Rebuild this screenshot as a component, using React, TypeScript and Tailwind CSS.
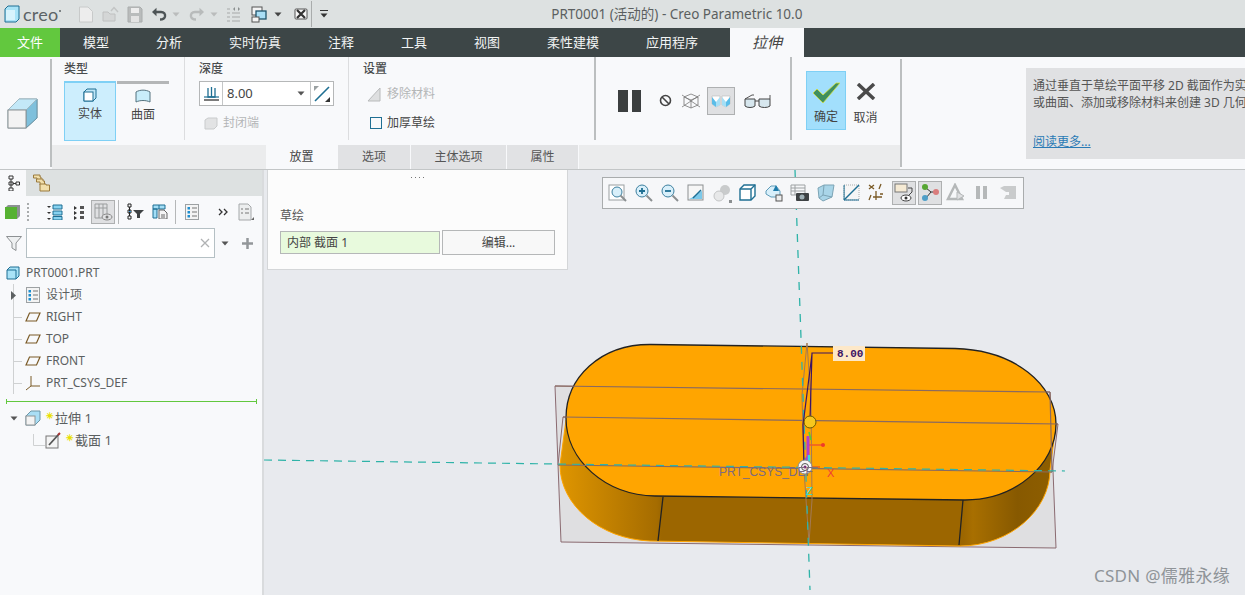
import React from 'react';

type IconProps = { children: React.ReactNode; w?: number; h?: number };

// every small glyph uses the same wrapper, drawn on a box of its real pixel size
const Ico = ({ children, w = 16, h = 16 }: IconProps) => (
  <svg width={w} height={h} viewBox={`0 0 ${w} ${h}`} className="block shrink-0" fill="none">
    {children}
  </svg>
);

const Caret = ({ color = '#555' }: { color?: string }) => (
  <Ico w={8} h={5}>
    <path d="M0.5 0.5H7.5L4 4.5Z" fill={color} />
  </Ico>
);

const SolidCube = () => (
  <Ico w={32} h={32}>
    <path d="M2 13L13 2H31V21L20 31H2Z" fill="#d5ecf6" stroke="#8fa6ad" />
    <path d="M20 13L31 2V21L20 31Z" fill="#7fc0dc" stroke="#6d95a6" />
    <path d="M2 13L13 2H31L20 13Z" fill="#c3e8f8" stroke="#9fb9c4" />
    <rect x="2" y="13" width="18" height="18" fill="#f3f3f3" stroke="#8e9496" />
  </Ico>
);

const QuickBar = () => (
  <div className="flex h-[28px] items-center bg-[#dde1e1]">
    <div className="ml-[3px] flex items-center gap-[3px]">
      <Ico w={17} h={18}>
        <path d="M2 4L5 1H16V14L13 17H2Z" fill="#a9e3f7" stroke="#1f6f93" />
        <path d="M3 5H12V15H3Z" fill="#d8f3fc" />
      </Ico>
      <span className="[font-family:'Lato',sans-serif] text-[18px] leading-none tracking-[0.2px] text-[#5c6366]">creo</span>
      <span className="mb-[6px] ml-[-2px] h-[2px] w-[2px] rounded-full bg-[#5c6366]" />
    </div>
    <div className="ml-[17px] flex items-center gap-[8px] opacity-90">
      <Ico w={16} h={17}>
        <path d="M1.5 1H10L14.5 5.5V16H1.5Z" fill="#efefef" stroke="#c6c8c8" />
      </Ico>
      <Ico w={17} h={17}>
        <path d="M1 15V6H6L8 8H13V15Z" fill="#d4d5d5" stroke="#bcbebe" />
        <path d="M9 5L12 1.5L16 6" stroke="#c0c2c2" strokeWidth="1.4" />
      </Ico>
      <Ico w={16} h={17}>
        <path d="M1 1H13L15 3V16H1Z" fill="#b6b9b9" stroke="#a5a8a8" />
        <rect x="4" y="2" width="8" height="5" fill="#efefef" />
        <rect x="4" y="10" width="8" height="6" fill="#e4e4e4" />
      </Ico>
      <div className="flex items-center gap-[5px]">
        <Ico w={16} h={14}>
          <path d="M4 5H10C13 5 14.5 7 14 9.5C13.5 11.5 11.5 12.5 9 12.5" stroke="#3e4547" strokeWidth="2.4" />
          <path d="M1 5L5.5 0.8V9.2Z" fill="#3e4547" />
        </Ico>
        <Caret color="#b7b9b9" />
      </div>
      <div className="ml-[1px] flex items-center gap-[5px]">
        <Ico w={16} h={14}>
          <path d="M12 5H6C3 5 1.5 7 2 9.5C2.5 11.5 4.5 12.5 7 12.5" stroke="#b4b7b7" strokeWidth="2.4" />
          <path d="M15 5L10.5 0.8V9.2Z" fill="#b4b7b7" />
        </Ico>
        <Caret color="#b7b9b9" />
      </div>
    </div>
    <div className="ml-[8px] flex items-center">
      <Ico w={16} h={17}>
        <path d="M1 3H4M1 7H4M1 11H4M1 15H4M6 7H14M6 11H14M6 15H14" stroke="#b9bcbc" strokeWidth="1.5" />
        <path d="M7 3L9 1V5ZM14 3L12 1V5Z" fill="#8b9090" />
      </Ico>
      <div className="ml-[9px]">
        <Ico w={18} h={17}>
          <rect x="1" y="1" width="10" height="8" fill="#f4f4f4" stroke="#555" />
          <rect x="5" y="5" width="10" height="8" fill="#a9def5" stroke="#20536b" strokeWidth="1.3" />
          <rect x="1" y="11" width="7" height="5" fill="#f4f4f4" stroke="#555" />
        </Ico>
      </div>
      <div className="ml-[5px]">
        <Caret color="#444" />
      </div>
      <div className="ml-[12px]">
        <Ico w={14} h={12}>
          <rect x="1" y="1" width="12" height="10" rx="1" fill="#f7f7f7" stroke="#555" />
          <path d="M3 2L11 10M11 2L3 10" stroke="#333" strokeWidth="2.2" />
        </Ico>
      </div>
      <div className="ml-[3px] h-[26px] w-px bg-[#a9acac]" />
      <div className="ml-[8px] flex flex-col gap-[2px]">
        <div className="h-px w-[8px] bg-[#333]" />
        <Caret color="#333" />
      </div>
    </div>
    <div className="ml-[223px] text-[13.5px] text-[#5b5f60]">PRT0001 (活动的) - Creo Parametric 10.0</div>
  </div>
);

const menuItems = ['模型', '分析', '实时仿真', '注释', '工具', '视图', '柔性建模', '应用程序'];

const MenuBar = () => (
  <div className="flex h-[29px] items-center bg-[#3d4647] text-[13px] text-[#f2f4f4]">
    <div className="flex h-full w-[60px] items-center justify-center bg-[#62c83e] text-white">文件</div>
    <div className="ml-[23px] flex gap-[47px]">
      {menuItems.map((m) => (
        <span key={m}>{m}</span>
      ))}
    </div>
    <div className="ml-[32px] flex h-full w-[74px] items-center justify-center bg-[#f8f9fb] text-[15px] italic text-[#444]">
      拉伸
    </div>
  </div>
);

const GroupTitle = ({ children }: { children: React.ReactNode }) => (
  <div className="text-[12px] font-medium leading-[16px] text-[#4a4d4e]">{children}</div>
);

const ribbonTabs = [
  { label: '放置', w: 'w-[72px]', on: true },
  { label: '选项', w: 'w-[73px]', on: false },
  { label: '主体选项', w: 'w-[96px]', on: false },
  { label: '属性', w: 'w-[72px]', on: false },
];

const Ribbon = () => (
  <div className="flex h-[113px] border-b border-[#c3c6c7] bg-[#f8f9fb]">
    <div className="flex w-[50px] items-center pl-[6px]">
      <SolidCube />
    </div>
    <div className="my-[2px] w-[2px] bg-[#bcbfc0]" />
    <div className="flex w-[848px] flex-col">
      <div className="flex h-[88px]">
        {/* 类型 */}
        <div className="flex h-[83px] w-[133px] flex-col border-r border-[#dcdddf] pl-[12px] pt-[4px]">
          <GroupTitle>类型</GroupTitle>
          <div className="mt-[4px] flex gap-[1px]">
            <div className="flex h-[60px] w-[52px] flex-col items-center border border-[#7fd0f5] border-t-2 bg-[#cdeefd] pt-[5px] text-[12px] text-[#444]">
              <Ico w={14} h={14}>
                <path d="M1 4L4 1H13V10L10 13H1Z" fill="#bfe6f7" stroke="#1f6f93" />
                <rect x="1" y="4" width="9" height="9" fill="#fff" stroke="#1f6f93" />
              </Ico>
              <span className="mt-[3px] leading-[18px]">实体</span>
            </div>
            <div className="flex h-[60px] w-[52px] flex-col items-center border-t-[3px] border-[#b4b6b7] pt-[5px] text-[12px] text-[#444]">
              <Ico w={16} h={14}>
                <path d="M1 3C5 0.5 11 0.5 15 3V13C11 11 5 11 1 13Z" fill="#c8edfa" stroke="#55737f" />
              </Ico>
              <span className="mt-[3px] leading-[18px]">曲面</span>
            </div>
          </div>
        </div>
        {/* 深度 */}
        <div className="flex h-[83px] w-[164px] flex-col border-r border-[#dcdddf] pl-[14px] pt-[4px]">
          <GroupTitle>深度</GroupTitle>
          <div className="mt-[4px] flex h-[25px] w-[135px] items-center border border-[#b5b7b8] bg-white">
            <div className="flex h-full w-[23px] items-center justify-center border-r border-[#c4c6c7]">
              <Ico w={17} h={16}>
                <path d="M5 2V11H12V2M8.500 1V11" stroke="#1f6f93" strokeWidth="1.3" />
                <path d="M1 11H16" stroke="#1f6f93" strokeWidth="1.2" />
                <path d="M1 14H16" stroke="#333" strokeWidth="1.3" />
              </Ico>
            </div>
            <span className="ml-[4px] flex-1 text-[13px] text-[#444]">8.00</span>
            <div className="mr-[5px]">
              <Caret />
            </div>
            <div className="flex h-full w-[23px] items-center justify-center border-l border-[#c4c6c7]">
              <Ico w={18} h={18}>
                <path d="M2 16L16 2" stroke="#1f6f93" strokeWidth="1.6" />
                <path d="M1 1H6L1 6Z" fill="#9aa0a2" />
                <path d="M17 17H12L17 12Z" fill="#333" />
              </Ico>
            </div>
          </div>
          <div className="ml-[5px] mt-[8px] flex items-center gap-[5px] text-[12px] text-[#b4b6b7]">
            <Ico w={14} h={13}>
              <path d="M1 3L4 1H13V9L10 12H1Z" fill="#e2e3e4" stroke="#c9cbcc" />
            </Ico>
            封闭端
          </div>
        </div>
        {/* 设置 */}
        <div className="flex h-[83px] w-[247px] flex-col border-r-2 border-[#bcbfc0] pl-[14px] pt-[4px]">
          <GroupTitle>设置</GroupTitle>
          <div className="ml-[4px] mt-[8px] flex items-center gap-[5px] text-[12px] text-[#b4b6b7]">
            <Ico w={15} h={15}>
              <path d="M1 14L13 1V14Z" fill="#dedfe0" stroke="#b8babb" />
            </Ico>
            移除材料
          </div>
          <div className="ml-[7px] mt-[11px] flex items-center gap-[5px] text-[12px] text-[#444]">
            <div className="h-[12px] w-[12px] border border-[#1f6f93]" />
            加厚草绘
          </div>
        </div>
        {/* 暂停与预览 */}
        <div className="flex h-[83px] w-[196px] items-center border-r-2 border-[#bcbfc0] pl-[22px] pt-[4px]">
          <div className="flex gap-[3px]">
            <div className="h-[22px] w-[10px] bg-[#3c3f40]" />
            <div className="ml-[1px] h-[22px] w-[9px] bg-[#3c3f40]" />
          </div>
          <div className="ml-[18px]">
            <Ico w={13} h={13}>
              <circle cx="6.500" cy="6.500" r="5" stroke="#444" strokeWidth="1.600" />
              <path d="M3 3L10 10" stroke="#444" strokeWidth="1.600" />
            </Ico>
          </div>
          <div className="ml-[9px]">
            <Ico w={20} h={18}>
              <path d="M3 5L10 2L17 5V13L10 16L3 13ZM3 5L10 8L17 5M10 8V16M1 3L19 15M19 3L1 15" stroke="#777" strokeWidth="0.8" />
            </Ico>
          </div>
          <div className="ml-[6px] flex h-[28px] w-[28px] items-center justify-center border border-[#aeb0b1] bg-[#dfe0e2]">
            <Ico w={20} h={14}>
              <path d="M1 2H9V11L5 13L1 10ZM11 2H19V10L15 13L11 11Z" fill="#fff" stroke="#bbb" strokeWidth="0.6" />
              <path d="M1 3L5 8V13L1 10ZM19 3L15 8V13L19 10Z" fill="#5bbde8" />
              <path d="M9 3L5 8V13L9 11ZM11 3L15 8V13L11 11Z" fill="#a5dff6" />
            </Ico>
          </div>
          <div className="ml-[9px]">
            <Ico w={27} h={16}>
              <path d="M1 6L8 2H10M26 2V6" stroke="#555" />
              <path d="M1 6H11V13C9 15 3 15 1 13Z" fill="#d7e7ee" stroke="#444" />
              <path d="M15 6H26V13C24 15 17 15 15 13Z" fill="#d7e7ee" stroke="#444" />
              <path d="M11 8H15" stroke="#444" />
            </Ico>
          </div>
        </div>
        {/* 确定 取消 */}
        <div className="flex items-start pl-[14px] pt-[14px]">
          <div className="flex h-[59px] w-[40px] flex-col items-center justify-between border border-[#7fd0f5] bg-[#a2dffc] pb-[3px] pt-[9px] text-[12px] text-[#444]">
            <Ico w={28} h={24}>
              <path d="M1 12L5 8L11 14L24 2L28 2L11 22Z" fill="#3f8f5f" stroke="#d8e23a" strokeWidth="0.8" />
            </Ico>
            <span className="leading-[18px]">确定</span>
          </div>
          <div className="flex h-[59px] w-[39px] flex-col items-center justify-between pb-[3px] pt-[12px] text-[12px] text-[#444]">
            <Ico w={20} h={17}>
              <path d="M2 1L18 16M18 1L2 16" stroke="#4a4a4a" strokeWidth="3.500" />
            </Ico>
            <span className="leading-[18px]">取消</span>
          </div>
        </div>
      </div>
      <div className="flex h-[24px] bg-[#ebeced] pl-[214px] text-[12px] text-[#555]">
        {ribbonTabs.map((t) => (
          <div
            key={t.label}
            className={`flex ${t.w} items-center justify-center border-r border-[#f8f9fb] ${
              t.on ? 'bg-[#f8f9fb] text-[#444]' : 'bg-[#e1e2e4]'
            }`}
          >
            {t.label}
          </div>
        ))}
      </div>
    </div>
    <div className="my-[2px] w-[2px] bg-[#bcbfc0]" />
    <div className="min-w-0 flex-1 pl-[124px] pt-[11px]">
      <div className="flex h-[91px] flex-col overflow-hidden whitespace-nowrap bg-[#e0e1e3] pl-[7px] pt-[9px] text-[12px] leading-[17px] text-[#555]">
        <span>通过垂直于草绘平面平移 2D 截面作为实体</span>
        <span>或曲面、添加或移除材料来创建 3D 几何。</span>
        <span className="mt-[22px] text-[#2a7ab5] underline">阅读更多...</span>
      </div>
    </div>
  </div>
);

const Guide = ({ tail = true, caret = false }: { tail?: boolean; caret?: boolean }) => (
  <Ico w={25} h={22}>
    <path d="M13.500 0V22" stroke="#cfd1d2" />
    {tail && <path d="M13.500 11.500H22" stroke="#cfd1d2" />}
    {caret && <path d="M11 7L16 11.500L11 16Z" fill="#5c6062" />}
  </Ico>
);

const Plane = () => (
  <Ico w={16} h={10}>
    <path d="M1 9L4.500 1H15L11.500 9Z" stroke="#7a5a26" strokeWidth="1.200" />
  </Ico>
);

const ListIcon = () => (
  <Ico w={14} h={16}>
    <rect x="0.500" y="0.500" width="13" height="15" fill="#f4f4f4" stroke="#9da1a3" />
    <path d="M2.500 3H5V5.500H2.500ZM2.500 7H5V9.500H2.500ZM2.500 11H5V13.500H2.500Z" fill="#1d8ed0" />
    <path d="M7 4H12M7 8H12M7 12H12" stroke="#777" />
  </Ico>
);

const treeRow = 'flex h-[22px] items-center text-[12px] text-[#5b5f60]';

const Sidebar = () => (
  <div className="flex w-[264px] shrink-0 flex-col border-r-2 border-[#d9dbdd] bg-[#f8f9fb]">
    <div className="flex h-[26px] bg-[#dde1e1]">
      <div className="flex w-[26px] items-center justify-center bg-[#f8f9fb]">
        <Ico w={13} h={16}>
          <path d="M2 1H6V4H2ZM2 7H6V10H2ZM2 13H6V16H2ZM9 7H12.500V10H9ZM4 4V13M6 8.500H9" stroke="#333" />
        </Ico>
      </div>
      <div className="ml-[7px] flex items-center">
        <Ico w={17} h={18}>
          <path d="M0.500 1H7V3H8V7H4V4H0.500Z" fill="#f1dfab" stroke="#9a7a3c" />
          <path d="M3.500 5H10V7H11.500V11H7V8H3.500Z" fill="#f1dfab" stroke="#9a7a3c" />
          <path d="M7 10H13V11H16.500V17H7Z" fill="#f1dfab" stroke="#9a7a3c" />
        </Ico>
      </div>
    </div>
    <div className="flex h-[31px] items-center pl-[5px]">
      <Ico w={15} h={14}>
        <path d="M0 3L3 0H15V11L12 14H0Z" fill="#8c9193" />
        <rect x="0" y="2" width="12" height="12" fill="#56b132" />
      </Ico>
      <div className="ml-[7px] flex flex-col gap-[2px]">
        {[0, 1, 2, 3, 4].map((i) => (
          <div key={i} className="h-[2px] w-[2px] bg-[#a9acad]" />
        ))}
      </div>
      <div className="ml-[18px]">
        <Ico w={16} h={16}>
          <path d="M0 2H4L2 4ZM0 8H4L2 10ZM0 14H4L2 16Z" fill="#333" />
          <path d="M6 1H15V5H6ZM6 7H15V11H6ZM6 12.500H15V16H6Z" fill="#87d2f0" stroke="#1f6f93" />
        </Ico>
      </div>
      <div className="ml-[11px]">
        <Ico w={10} h={16}>
          <path d="M0 2L3 4L0 6ZM0 7L3 9L0 11ZM0 12L3 14L0 16Z" fill="#333" />
          <path d="M6 2H10V5H6ZM6 7H10V10H6ZM6 12H10V15H6Z" fill="#555" />
        </Ico>
      </div>
      <div className="ml-[7px] flex h-[24px] w-[24px] items-center justify-center border border-[#aeb0b1] bg-[#dfe0e2]">
        <Ico w={19} h={18}>
          <path d="M1 1H13V15H1ZM1 5H13M5 1V15M9 1V15" stroke="#9a9d9e" />
          <ellipse cx="13" cy="14" rx="5" ry="3" fill="#dfe0e2" stroke="#888" />
          <circle cx="13" cy="14" r="1.500" fill="#777" />
        </Ico>
      </div>
      <div className="ml-[3px] h-[24px] w-px bg-[#b5b7b8]" />
      <div className="ml-[8px]">
        <Ico w={18} h={17}>
          <path d="M1 1H4V4H1ZM1 7H4V10H1ZM1 13H4V16H1ZM2.500 4V13" stroke="#222" />
          <path d="M2 8H4V9H2Z" fill="#2a8ccc" />
          <path d="M6 7H17L13 11V15H10V11Z" fill="#3e4244" />
        </Ico>
      </div>
      <div className="ml-[7px]">
        <Ico w={16} h={15}>
          <path d="M1 1H13V5H1ZM1 5H5V14H1ZM7 1V5" fill="#a3def6" stroke="#1f6f93" />
          <path d="M7 6H12L15 9V15H7Z" fill="#f4f4f4" stroke="#666" />
          <path d="M9 11H13M9 13H13" stroke="#666" />
        </Ico>
      </div>
      <div className="ml-[7px] h-[24px] w-px bg-[#b5b7b8]" />
      <div className="ml-[9px]">
        <ListIcon />
      </div>
      <div className="ml-[19px]">
        <Ico w={10} h={8}>
          <path d="M1 1L4 4L1 7M6 1L9 4L6 7" stroke="#333" strokeWidth="1.300" />
        </Ico>
      </div>
      <div className="ml-[10px]">
        <Ico w={16} h={18}>
          <path d="M1 1H10L13 4V17H1Z" fill="#eceeef" stroke="#a5a8aa" />
          <path d="M3 6H5M7 6H11M3 10H5M7 10H11" stroke="#777" />
          <path d="M16 14V17H13Z" fill="#666" />
        </Ico>
      </div>
    </div>
    <div className="mt-px flex h-[30px] items-center pl-[6px]">
      <Ico w={16} h={15}>
        <path d="M0.500 0.500H15.500L10 7V14.500L6 12V7Z" fill="#eef0f1" stroke="#8d9193" />
      </Ico>
      <div className="ml-[4px] flex h-[30px] w-[189px] items-center justify-end border border-[#b5c0c4] bg-white pr-[4px]">
        <Ico w={10} h={10}>
          <path d="M1 1L9 9M9 1L1 9" stroke="#b0b2b3" strokeWidth="1.300" />
        </Ico>
      </div>
      <div className="ml-[6px]">
        <Caret />
      </div>
      <div className="ml-[13px]">
        <Ico w={11} h={11}>
          <path d="M5.500 0V11M0 5.500H11" stroke="#93979a" strokeWidth="2.500" />
        </Ico>
      </div>
    </div>
    <div className="mt-[4px] flex flex-col">
      <div className={`${treeRow} pl-[6px]`}>
        <Ico w={14} h={14}>
          <path d="M1 4L4 1H13V10L10 13H1Z" fill="#a9e3f7" stroke="#1f6f93" />
          <path d="M1 4H10V13" stroke="#1f6f93" />
        </Ico>
        <span className="ml-[6px]">PRT0001.PRT</span>
      </div>
      <div className={treeRow}>
        <div className="mr-px">
          <Guide tail={false} caret />
        </div>
        <ListIcon />
        <span className="ml-[6px]">设计项</span>
      </div>
      {['RIGHT', 'TOP', 'FRONT'].map((n) => (
        <div key={n} className={treeRow}>
          <Guide />
          <Plane />
          <span className="ml-[5px]">{n}</span>
        </div>
      ))}
      <div className={treeRow}>
        <Guide />
        <Ico w={16} h={16}>
          <path d="M6 1V11M6 11H15M6 11L1 15" stroke="#7a5a26" />
        </Ico>
        <span className="ml-[5px]">PRT_CSYS_DEF</span>
      </div>
      <div className="mt-[6px] flex h-[3px] w-[251px] translate-x-[6px] items-center justify-between">
        <div className="h-[5px] w-px bg-[#62c83e]" />
        <div className="h-px flex-1 bg-[#62c83e]" />
        <div className="h-[5px] w-px bg-[#62c83e]" />
      </div>
      <div className={`${treeRow} mt-[4px]`}>
        <div className="ml-[10px]">
          <Caret />
        </div>
        <div className="ml-[7px]">
          <Ico w={16} h={16}>
            <path d="M1 6L6 1H15V10L10 15H1Z" fill="#a9def5" stroke="#6d95a6" />
            <rect x="1" y="6" width="9" height="9" fill="#f3f3f3" stroke="#8e9496" />
          </Ico>
        </div>
        <span className="ml-[5px] text-[13px] leading-none"><Star />拉伸 1</span>
      </div>
      <div className={treeRow}>
        <div className="ml-[33px]">
          <Ico w={12} h={12}>
            <path d="M0.500 0V11.500H12" stroke="#cfd1d2" />
          </Ico>
        </div>
        <Ico w={17} h={17}>
          <rect x="1" y="4" width="12" height="12" fill="#f4f4f4" stroke="#777" />
          <path d="M4 13L14 2" stroke="#555" strokeWidth="1.800" />
          <path d="M13 3L15 1" stroke="#a33" strokeWidth="2" />
        </Ico>
        <span className="ml-[4px] text-[13px] leading-none"><Star />截面 1</span>
      </div>
    </div>
  </div>
);

const Star = () => (
  <span className="relative top-[-4px] mr-px text-[9px] font-bold text-[#e8e000]">✳</span>
);

const viewIcons: { key: string; on?: boolean; draw: React.ReactNode }[] = [
  { key: 'refit', draw: (<><rect x="1" y="2" width="15" height="15" fill="#fff" stroke="#9aa0a2" /><circle cx="9" cy="9" r="5" fill="#d8effa" stroke="#3c7f9f" /><path d="M12.500 12.500L18 18" stroke="#8b8f91" strokeWidth="2" /></>) },
  { key: 'in', draw: (<><circle cx="8" cy="8" r="6" fill="#d8effa" stroke="#3c7f9f" /><path d="M5 8H11M8 5V11" stroke="#1f6f93" strokeWidth="1.800" /><path d="M12.500 12.500L18 18" stroke="#8b8f91" strokeWidth="2" /></>) },
  { key: 'out', draw: (<><circle cx="8" cy="8" r="6" fill="#d8effa" stroke="#3c7f9f" /><path d="M5 8H11" stroke="#1f6f93" strokeWidth="1.800" /><path d="M12.500 12.500L18 18" stroke="#8b8f91" strokeWidth="2" /></>) },
  { key: 'repaint', draw: (<><rect x="2" y="2" width="15" height="15" fill="#f6f6f6" stroke="#8b8f91" /><path d="M3 16C9 14 12 9 16 8V16Z" fill="#7cc9ea" /><path d="M7 15L15 7" stroke="#1f6f93" strokeWidth="1.400" /></>) },
  { key: 'shade', draw: (<><circle cx="13" cy="7" r="5" fill="#c9cbcc" /><circle cx="7" cy="13" r="5" fill="#e7e8e9" stroke="#c3c5c6" /><path d="M17 17H20V20H17Z" fill="#8b8f91" /></>) },
  { key: 'box', draw: (<><path d="M2 6L6 2H17V13L13 17H2Z" fill="#fff" stroke="#1f6f93" strokeWidth="1.400" /><path d="M2 6H13V17M13 6L17 2" stroke="#1f6f93" strokeWidth="1.400" /></>) },
  { key: 'saved', draw: (<><path d="M2 8L7 3H12L16 8V14H7L2 11Z" fill="#d8effa" stroke="#5e9bb8" /><path d="M12 2L15 8H9Z" fill="#1f7cab" /><rect x="12" y="12" width="6" height="6" fill="#eee" stroke="#555" /></>) },
  { key: 'photo', draw: (<><path d="M1 2H15V12H1ZM1 5H15M1 8H15M5 2V12" stroke="#9da1a3" /><rect x="6" y="10" width="13" height="8" rx="1" fill="#3e4244" /><circle cx="12" cy="14" r="2.500" fill="#9fb0b6" /></>) },
  { key: 'trans', draw: (<><path d="M2 5L8 2H18L16 14L7 18L3 15Z" fill="#a9d5e8" stroke="#7ca4b5" /><path d="M8 2L7 12L3 15M7 12L16 14" stroke="#7ca4b5" /></>) },
  { key: 'hatch', draw: (<><rect x="2" y="2" width="15" height="15" fill="#f6f6f6" stroke="#a9acad" strokeDasharray="1 1" /><path d="M2 17L17 2" stroke="#1f6f93" strokeWidth="1.500" /><path d="M2 2H2.100V17H17" stroke="#1f6f93" /></>) },
  { key: 'datum', draw: (<><path d="M1 2L6 6M6 2L1 6M13 1L11 6M3 12L1 17M8 8L8 17M5 14H14M12 11H15" stroke="#7a5a26" strokeWidth="1.300" /></>) },
  { key: 'spin', on: true, draw: (<><rect x="1" y="1" width="12" height="8" fill="#f5ead4" stroke="#777" /><path d="M14 5H18V9M15 12L18 9" stroke="#444" /><ellipse cx="12" cy="15" rx="5" ry="3" fill="#fff" stroke="#444" /><circle cx="12" cy="15" r="1.500" fill="#333" /></>) },
  { key: 'nodes', on: true, draw: (<><path d="M6 5L11 9L6 15M11 9H16" stroke="#333" /><circle cx="5" cy="4" r="3" fill="#56a632" /><circle cx="16" cy="9" r="3" fill="#d97c7c" /><circle cx="5" cy="15" r="3" fill="#4f9ec7" /></>) },
  { key: 'play', draw: (<><path d="M9 2L2 16H16Z" stroke="#b5b8b9" strokeWidth="2.500" /><path d="M11 9L18 13L11 17Z" fill="#dfe0e2" stroke="#b5b8b9" /></>) },
  { key: 'pause', draw: (<><path d="M4 3H8V16H4ZM11 3H15V16H11Z" fill="#b5b8b9" /></>) },
  { key: 'solid', draw: (<><path d="M2 5L6 3H18V16H6L8 12H11V9H8L2 5Z" fill="#c9cbcc" /></>) },
];

const ViewToolbar = () => (
  <div className="absolute left-[338px] top-[7px] flex h-[32px] w-[422px] items-center border border-[#a9acad] bg-[#f6f7f9] pl-[2px]">
    {viewIcons.map((v) => (
      <div key={v.key} className="flex w-[26px] justify-center">
        <div
          className={`flex h-[24px] w-[24px] items-center justify-center ${
            v.on ? 'border border-[#aeb0b1] bg-[#dfe0e2]' : ''
          }`}
        >
          <Ico w={20} h={20}>
            {v.draw}
          </Ico>
        </div>
      </div>
    ))}
  </div>
);

const PlacementPanel = () => (
  <div className="absolute left-[3px] top-0 h-[100px] w-[301px] border border-t-0 border-[#d4d6d8] bg-[#fcfcfc] px-[12px]">
    <div className="mt-[7px] flex justify-center gap-[3px]">
      {[0, 1, 2, 3].map((i) => (
        <div key={i} className="h-px w-px bg-[#777]" />
      ))}
    </div>
    <div className="mt-[29px] text-[12px] leading-[18px] text-[#555]">草绘</div>
    <div className="mt-[5px] flex items-center gap-[2px]">
      <div className="flex h-[23px] w-[160px] items-center border border-[#b5b7b8] bg-[#e8fadd] pl-[6px] text-[12px] text-[#444]">
        内部 截面 1
      </div>
      <div className="flex h-[25px] w-[113px] items-center justify-center border border-[#b5b7b8] bg-[#f8f8f8] text-[12px] text-[#444]">
        编辑...
      </div>
    </div>
  </div>
);

// 3D model, drawn with the page coordinates as viewBox
const Model = () => (
  <svg className="absolute inset-0" width="981" height="425" viewBox="264 170 981 425" fill="none">
    <defs>
      <linearGradient id="side" gradientUnits="userSpaceOnUse" x1="558" y1="0" x2="1052" y2="0">
        <stop offset="0" stopColor="#e09600" />
        <stop offset="0.2" stopColor="#a56c00" />
        <stop offset="0.21" stopColor="#9c6600" />
        <stop offset="0.82" stopColor="#9c6600" />
        <stop offset="0.84" stopColor="#a86f00" />
        <stop offset="0.93" stopColor="#875900" />
        <stop offset="1" stopColor="#8e5e00" />
      </linearGradient>
    </defs>
    <path d="M555 386L1050 392L1056 548L561 542Z" fill="#dfdfe1" stroke="#8a6a70" />
    <path d="M563 417L1058 424L1052 472L558 465Z" fill="#dfdfe1" stroke="#8a6a70" />
    <path d="M566 420L560 465C560 505 600 539 650 541L960 546C1010 546 1050 510 1050 470L1056 424Z" fill="url(#side)" stroke="#ffa500" />
    <path d="M663 497L658 541M963 500L959 545" stroke="#222" strokeWidth="1.300" />
    <path d="M651 344.500L955 348.500C1015 350 1056 385 1056 424C1056 465 1015 500 965 500L655 496C605 495 566 460 566 418C566 378 600 344 651 344.500Z" fill="#ffa500" stroke="#222" strokeWidth="1.300" />
    <path d="M555 386L1050 392M563 417L1058 424M558 465L1052 472M1050 392L1052 472" stroke="#8a6a60" strokeWidth="1.200" />
    <path d="M807 343L802 395L804 470L809 543M807 343L811 400L812 500L809 543" stroke="#a37a55" />
    <path d="M264 460L1065 471" stroke="#2fb3a8" strokeWidth="1.200" strokeDasharray="8 6" />
    <path d="M795 170L810 590" stroke="#2fb3a8" strokeWidth="1.300" strokeDasharray="8 8" />
    <path d="M833 353H812L810 420M812 354L803 425L804 467" stroke="#3c1464" strokeWidth="1.200" />
    <rect x="833" y="346" width="32" height="15" fill="#fde8c8" />
    <text x="837" y="357" fill="#3c1464" fontFamily="Liberation Mono" fontWeight="700" fontSize="11">8.00</text>
    <path d="M809 445H822" stroke="#ef5a2a" strokeWidth="1.500" />
    <circle cx="823" cy="445" r="2" fill="#ef3a2a" />
    <path d="M808 436V456L804 467" stroke="#b23bd0" strokeWidth="3" />
    <path d="M809 455V465" stroke="#2fe0e0" strokeWidth="2.500" />
    <path d="M809 432L811 440" stroke="#55cc33" strokeWidth="1.500" />
    <path d="M811 467H820" stroke="#e03a2a" />
    <circle cx="810" cy="422" r="6" fill="#f7c71e" stroke="#6b5a00" />
    <circle cx="805" cy="467" r="7" fill="#f6f6f6" stroke="#888" />
    <circle cx="805" cy="467" r="3.500" stroke="#555" />
    <circle cx="805" cy="467" r="1.500" fill="#7a2a7a" />
    <text x="719" y="476" fill="#7d6a80" fontFamily="Liberation Sans" fontSize="12">PRT_CSYS_DEF</text>
    <text x="827" y="477" fill="#ef3a3a" fontFamily="Liberation Sans" fontSize="11">X</text>
    <text x="806" y="495" fill="#2fe0e0" fontFamily="Liberation Sans" fontSize="11">Z</text>
  </svg>
);

export default function App() {
  return (
    <div className="flex h-[595px] w-[1245px] flex-col overflow-hidden [font-family:'Noto_Sans','Noto_Sans_CJK_SC',sans-serif]">
      <QuickBar />
      <MenuBar />
      <Ribbon />
      <div className="flex min-h-0 flex-1">
        <Sidebar />
        <div className="relative flex-1 bg-[#e8eaee]">
          <Model />
          <PlacementPanel />
          <ViewToolbar />
          <div className="absolute bottom-[7px] right-[15px] text-[17px] tracking-[0.3px] text-[#8f9498]">CSDN @儒雅永缘</div>
        </div>
      </div>
    </div>
  );
}
